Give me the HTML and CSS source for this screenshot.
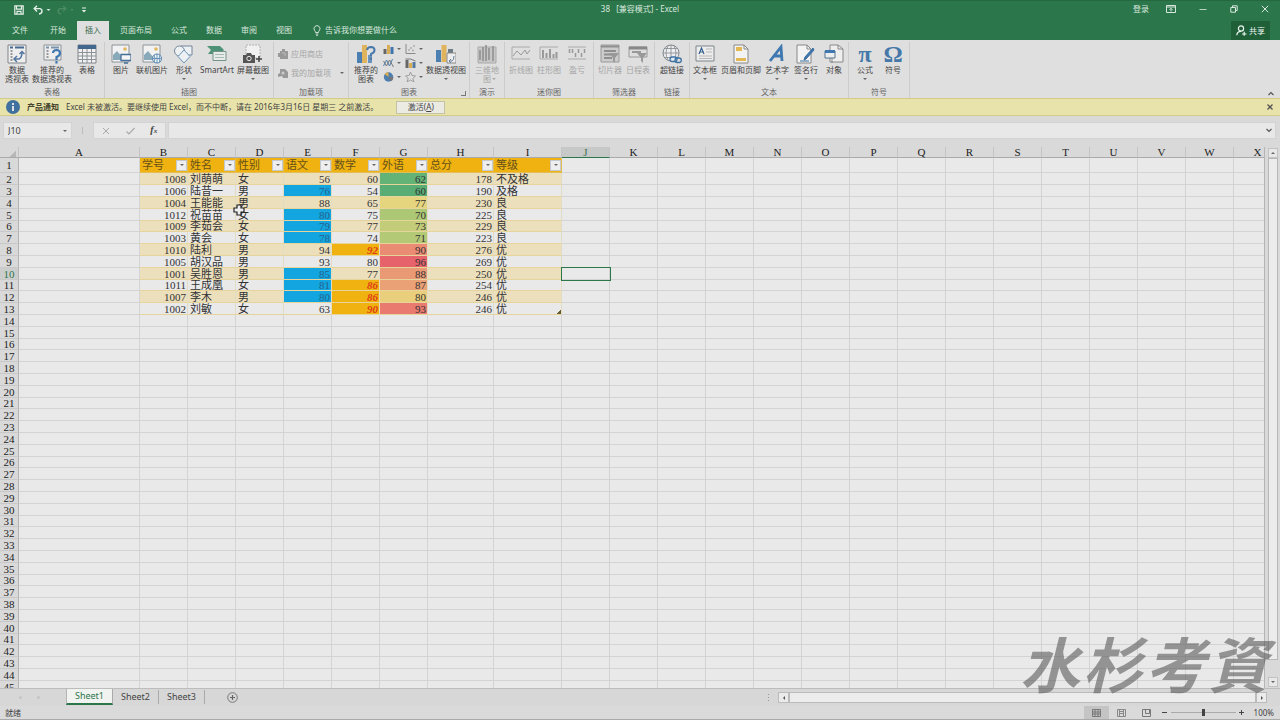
FILE: index.html
```html
<!DOCTYPE html>
<html lang="zh-CN">
<head>
<meta charset="utf-8">
<title>38 [兼容模式] - Excel</title>
<link rel="stylesheet" href="styles.css">
</head>
<body>
<div class="app">
  <header class="top">
    <div class="titlebar">
      <div class="quick">
        <button aria-label="保存"><svg width="10" height="10" viewBox="0 0 10 10"><path d="M.8.8h8.4v8.4H.8zM2.5 1v3.2h5V1M3 9V6.300h4V9" fill="none" stroke="#e4f0e8" stroke-width="1.200"/></svg></button>
        <button aria-label="撤消"><svg width="18" height="10" viewBox="0 0 18 10"><path d="M4 .8L1.200 3.600 4 6.400M1.500 3.600H6.500Q9 3.800 9 6 9 8.500 6 9" fill="none" stroke="#e4f0e8" stroke-width="1.400"/><path d="M13.500 4h4l-2 2z" fill="#d5e6db"/></svg></button>
        <button aria-label="恢复"><svg width="18" height="10" viewBox="0 0 18 10"><path d="M6 .8l2.800 2.800L6 6.400M8.500 3.600H3.500Q1 3.800 1 6 1 8.500 4 9" fill="none" stroke="#4b8c66" stroke-width="1.200"/><path d="M13.500 4h3l-1.500 2z" fill="#4b8c66"/></svg></button>
        <button aria-label="自定义"><svg width="6" height="8" viewBox="0 0 6 8"><path d="M1 2h4" stroke="#e4f0e8"/><path d="M.8 4h4.400L3 6.400z" fill="#e4f0e8"/></svg></button>
      </div>
      <h1 class="doc">38&nbsp;&nbsp; [兼容模式] - Excel</h1>
      <div class="window">
        <button>登录</button>
        <button aria-label="功能区显示选项"><svg width="10" height="8" viewBox="0 0 10 8"><path d="M.5.5h9v7h-9zM.5 2h9M5 6.500V3.500M3.500 4.800L5 3.300l1.500 1.500" fill="none" stroke="#d8e8de"/></svg></button>
        <button aria-label="最小化"><svg width="8" height="8" viewBox="0 0 8 8"><path d="M.5 4.500h7" stroke="#b9d3c3"/></svg></button>
        <button aria-label="还原"><svg width="8" height="8" viewBox="0 0 8 8"><path d="M.8 2.500h4.700v4.700H.8zM2.500 2.500V.8h4.700v4.700H5.500" fill="none" stroke="#d8e8de"/></svg></button>
        <button aria-label="关闭"><svg width="8" height="8" viewBox="0 0 8 8"><path d="M.8.8l6.400 6.400M7.200.8L.8 7.200" stroke="#d8e8de"/></svg></button>
      </div>
    </div>
    <nav class="tabs">
      <button class="file">文件</button><button>开始</button><button class="on">插入</button><button>页面布局</button><button>公式</button><button>数据</button><button>审阅</button><button>视图</button>
      <button class="tell"><svg width="8" height="11" viewBox="0 0 8 11"><path d="M2.500 7.500Q2.500 6.300 1.500 5.300A3 3 0 1 1 6.500 5.300Q5.500 6.300 5.500 7.500zM2.700 9h2.600M3 10.300h2" fill="none" stroke="#dcebe2" stroke-width=".9"/></svg>告诉我你想要做什么</button>
      <button class="share"><svg width="11" height="11" viewBox="0 0 11 11"><circle cx="5" cy="3.500" r="2.600" fill="none" stroke="#edf5f0" stroke-width="1.200"/><path d="M.8 10.300Q1 6.300 5 6.300M6 9h4.500M8.200 6.800v4" fill="none" stroke="#edf5f0" stroke-width="1.200"/></svg>共享</button>
    </nav>
  </header>

  <section class="ribbon">
    <div class="group"><div class="tools">
      <button class="tool w34"><svg viewBox="0 0 20 20"><path d="M1 1h18v18H1z" fill="#eee" stroke="#7e868c"/><path d="M3 3.500h3M8 3.500h9" stroke="#456a91" stroke-width="2"/><path d="M4.500 6v11" stroke="#999" stroke-width="2" stroke-dasharray="2 1"/><path d="M8 15h4q3-1 3-7M10 12l-3 3 3 3M12.500 10L15 7.500l2.500 2.500" fill="none" stroke="#55789f" stroke-width="1.500"/></svg><span>数据<br>透视表</span></button>
      <button class="tool w36"><svg viewBox="0 0 20 20"><path d="M2 1h17v15H2z" fill="#eee" stroke="#899197"/><path d="M4 3.500h3M9 3.500h8" stroke="#7b93ac" stroke-width="2"/><path d="M5.500 6v9" stroke="#999" stroke-width="2" stroke-dasharray="2 1"/><path d="M11 9q.3-3 3.500-3 3.500.2 3.500 3t-3.500 4v3M14.500 17v2.500" fill="none" stroke="#3f77b0" stroke-width="2.200"/></svg><span>推荐的<br>数据透视表</span></button>
      <button class="tool w34"><svg viewBox="0 0 20 20"><path d="M1 1h18v18H1z" fill="#f1f1f1" stroke="#7e868c"/><path d="M1 1h18v4H1z" fill="#41678e"/><path d="M1 8.500h18M1 12h18M1 15.500h18M5.500 5v14M10 5v14M14.500 5v14" stroke="#8c9297"/></svg><span>表格</span></button>
    </div><h2>表格</h2></div>

    <div class="group"><div class="tools pad">
      <button class="tool w28"><svg viewBox="0 0 20 20"><path d="M1 1h17v17H1z" fill="#f2f2f2" stroke="#8e9498"/><path d="M2 15v-4l4-4 6 7v2H2z" fill="#87a9b9"/><circle cx="14" cy="5" r="1.800" fill="#e2b65a"/><path d="M10 10.500h10v6H10zM13 19h4" fill="#f5f5f5" stroke="#456f9b" stroke-width="1.300"/></svg><span>图片</span></button>
      <button class="tool w34"><svg viewBox="0 0 20 20"><path d="M1 1h17v17H1z" fill="#f2f2f2" stroke="#8e9498"/><path d="M2 15v-4l4-4 6 7v2H2z" fill="#87a9b9"/><circle cx="14" cy="5" r="1.800" fill="#e2b65a"/><circle cx="15" cy="14.500" r="4.500" fill="#eef3f7" stroke="#5181ac"/><path d="M10.500 14.500h9M15 10v9M12 11q2 3.500 0 7M18 11q-2 3.500 0 7" fill="none" stroke="#5181ac" stroke-width=".8"/></svg><span>联机图片</span></button>
      <button class="tool more"><svg viewBox="0 0 20 20"><path d="M7 2h11v9H7z" fill="#eef1f3" stroke="#73859b"/><circle cx="5.500" cy="7" r="5" fill="#eef1f3" stroke="#73859b"/><path d="M10 6l6 6.500-6 6.500-6-6.500z" fill="#eef1f3" stroke="#6b92b8"/></svg><span>形状</span></button>
      <button class="tool w36"><svg viewBox="0 0 20 20"><path d="M0 2h13l4 4-4 4H1l3-4z" fill="#4d9177"/><path d="M6 7.500h13v9H6z" fill="#e7ecea" stroke="#739486"/><path d="M8 10.500h9M8 13.500h9" stroke="#a9bab2"/></svg><span>SmartArt</span></button>
      <button class="tool w36 more"><svg viewBox="0 0 20 20"><path d="M3 1h14v13H3z" fill="#f1f1f1" stroke="#b0b0b0" stroke-dasharray="2 1"/><path d="M0 11h3l1-2h4l1 2h3v8H0z" fill="#555"/><circle cx="6" cy="14.500" r="2.200" fill="#555" stroke="#e8e8e8"/><path d="M16 12v6M13 15h6" stroke="#444" stroke-width="1.500"/></svg><span>屏幕截图</span></button>
    </div><h2>插图</h2></div>

    <div class="group"><div class="tools addins">
      <button class="off"><svg width="10" height="10" viewBox="0 0 10 10"><path d="M0 4h2V2h2V0h3v2h3v8H2V8H0z" fill="#999"/><path d="M4 4h3v3" stroke="#bbb" fill="none"/></svg>应用商店</button>
      <button class="off"><svg width="10" height="10" viewBox="0 0 10 10"><path d="M2 1h5l3 3v6H5L4 8 0 9V6l2-1z" fill="#999"/><circle cx="5" cy="5" r="1.500" fill="#ccc"/></svg>我的加载项<i class="arrow push"></i></button>
    </div><h2>加载项</h2></div>

    <div class="group launch"><div class="tools pad">
      <button class="tool"><svg viewBox="0 0 20 20"><path d="M1 8h5v11H1z" fill="#4c80b3"/><path d="M6 1h5v18H6z" fill="#dfb45d"/><path d="M12 11h4v8h-4z" fill="#6993ba"/><path d="M11 6q.5-3 4-3 3.500.2 3.500 3T15 10v2M15 13.500V16" fill="none" stroke="#4879a9" stroke-width="2"/></svg><span>推荐的<br>图表</span></button>
      <div class="mini">
        <button aria-label="柱形图"><svg viewBox="0 0 10 10"><path d="M0 5h3v5H0z" fill="#666"/><path d="M3.500 1h3v9h-3z" fill="#d8ad55"/><path d="M7 3h3v7H7z" fill="#3f74aa"/></svg><i class="arrow"></i></button>
        <button aria-label="散点图"><svg viewBox="0 0 10 10"><path d="M.5 0v9.500H10" fill="none" stroke="#888"/><path d="M3 6h1M5 4h1M7 6.500h1M8 2h1" stroke="#777" stroke-width="1.300"/></svg><i class="arrow"></i></button>
        <button aria-label="折线图"><svg viewBox="0 0 10 10"><path d="M0 8l3-6 3 6 3-7" fill="none" stroke="#4e7faf"/><path d="M0 3l3 5 3-6 4 7" fill="none" stroke="#777"/></svg><i class="arrow"></i></button>
        <button aria-label="组合图"><svg viewBox="0 0 10 10"><path d="M0 2h3v8H0z" fill="#666"/><path d="M3.500 5h3v5h-3z" fill="#d8ad55"/><path d="M7 4h3v6H7z" fill="#55789b"/><path d="M0 1h5l5 2" fill="none" stroke="#777"/></svg><i class="arrow"></i></button>
        <button aria-label="饼图"><svg viewBox="0 0 10 10"><circle cx="5" cy="5" r="4.700" fill="#4d7eae"/><path d="M5 5L1 2Q3-.3 5 .3z" fill="#d8ad55"/><path d="M5 5h5q-.2 3-2.500 4.200z" fill="#777"/></svg><i class="arrow"></i></button>
        <button aria-label="雷达图"><svg viewBox="0 0 10 10"><path d="M5 0l1.300 3.300L10 4 7.300 6.300 8.500 10 5 8 1.500 10l1.200-3.700L0 4l3.700-.7z" fill="none" stroke="#999" stroke-width=".9"/></svg><i class="arrow"></i></button>
      </div>
      <button class="tool w42 more"><svg viewBox="0 0 20 20"><path d="M0 6h5v12H0z" fill="#4c80b3"/><path d="M5.500 1h5v17h-5z" fill="#dfb45d"/><path d="M12 5h5v4h-5z" fill="#6d7b83"/><path d="M11 9h9v10h-9z" fill="#eee" stroke="#888"/><path d="M13 17h3q2-1 2-5M15 15l-2 2 2 2" fill="none" stroke="#657f99"/></svg><span>数据透视图</span></button>
    </div><h2>图表</h2></div>

    <div class="group"><div class="tools">
      <button class="tool w34 off more"><svg viewBox="0 0 20 20"><path d="M1 3h18v16H1z" fill="#c7c7c7" stroke="#aaa"/><path d="M3 6v10M6 3v14M9 1v16M12 4v12M16 2v15" stroke="#9b9b9b" stroke-width="2"/></svg><span>三维地<br>图</span></button>
    </div><h2>演示</h2></div>

    <div class="group"><div class="tools pad">
      <button class="tool w28 off"><svg viewBox="0 0 20 20"><path d="M1 3h18M1 15h18M1 3v12" stroke="#aaa"/><path d="M2 12l4-5 4 4 4-5 2 4 3-4" fill="none" stroke="#999"/></svg><span>折线图</span></button>
      <button class="tool w28 off"><svg viewBox="0 0 20 20"><path d="M1 3h18M1 15h18M1 3v12" stroke="#aaa"/><path d="M4 14V6M7.500 14V9M11 14V5M14.500 14v-4M17.500 14V8" stroke="#999" stroke-width="2"/></svg><span>柱形图</span></button>
      <button class="tool w28 off"><svg viewBox="0 0 20 20"><path d="M1 3h18M1 15h18" stroke="#aaa"/><path d="M2.500 5v4M5.500 5v4M8.500 9v4M11.500 5v4M14.500 9v4M17.500 5v4" stroke="#999" stroke-width="1.500"/></svg><span>盈亏</span></button>
    </div><h2>迷你图</h2></div>

    <div class="group"><div class="tools pad">
      <button class="tool w28 off"><svg viewBox="0 0 20 20"><path d="M1 1h18v17H1z" fill="#ccc" stroke="#999"/><path d="M1 2.500h18M4 7h12M4 10.500h8M4 14h8" stroke="#8f8f8f" stroke-width="2"/><path d="M9 9h10l-4 5v5l-2-2v-3z" fill="#999"/></svg><span>切片器</span></button>
      <button class="tool w28 off"><svg viewBox="0 0 20 20"><path d="M1 3h18v10H1z" fill="#ddd" stroke="#999"/><path d="M1 4h18" stroke="#888" stroke-width="3"/><path d="M4 8h9" stroke="#999" stroke-width="2"/><path d="M9 9h10l-4 5v5l-2-2v-3z" fill="#999"/></svg><span>日程表</span></button>
    </div><h2>筛选器</h2></div>

    <div class="group"><div class="tools">
      <button class="tool w34"><svg viewBox="0 0 20 20"><circle cx="9" cy="9" r="8" fill="#eee" stroke="#80878d"/><path d="M1 9h16M9 1v16M3 4.500h12M3 13.500h12M6 2q-4 7 0 14M12 2q4 7 0 14" fill="none" stroke="#80878d" stroke-width=".8"/><rect x="8" y="13" width="7" height="4.500" rx="2.200" fill="#e6ecf1" stroke="#3e72a5" stroke-width="1.300"/><rect x="13" y="14" width="6.300" height="4.500" rx="2.200" fill="none" stroke="#3e72a5" stroke-width="1.300"/></svg><span>超链接</span></button>
    </div><h2>链接</h2></div>

    <div class="group"><div class="tools">
      <button class="tool more"><svg viewBox="0 0 20 20"><path d="M1 2h18v15H1z" fill="#ededed" stroke="#7d858b"/><path d="M4 10l2.500-6L9 10M5 8h3" fill="none" stroke="#315f8d" stroke-width="1.200"/><path d="M11 5h6M11 8h6M4 12h13M4 14.500h13" stroke="#aaa" stroke-width=".8"/></svg><span>文本框</span></button>
      <button class="tool w42"><svg viewBox="0 0 20 20"><path d="M3 1h10l4 4v14H3z" fill="#f3f3f3" stroke="#888"/><path d="M13 1v4h4" fill="none" stroke="#888"/><path d="M5 3h6v4H5zM5 14h10v3H5z" fill="#e4b952"/></svg><span>页眉和页脚</span></button>
      <button class="tool more"><svg viewBox="0 0 20 20"><path d="M3 17L14 3l1 14M6 12h9" fill="none" stroke="#3f77b0" stroke-width="2.800"/></svg><span>艺术字</span></button>
      <button class="tool w28 more"><svg viewBox="0 0 20 20"><path d="M1 1h10l4 4v14H1z" fill="#f3f3f3" stroke="#888"/><path d="M11 1v4h4" fill="none" stroke="#888"/><path d="M18 6l-8 9-2 1 1-3 8-9zM4 17h9" fill="#3f77b0" stroke="#3b6d9e"/></svg><span>签名行</span></button>
      <button class="tool w28"><svg viewBox="0 0 20 20"><path d="M6 1h8l5 4v13H6z" fill="#eee" stroke="#888"/><path d="M14 1v4h5M8 19v-7" fill="none" stroke="#888"/><path d="M1 7h10v7H1z" fill="#eee" stroke="#56758f"/><path d="M1 7.500h10" stroke="#3f77b0" stroke-width="3"/></svg><span>对象</span></button>
    </div><h2>文本</h2></div>

    <div class="group"><div class="tools pad">
      <button class="tool w28 more"><b class="sym">π</b><span>公式</span></button>
      <button class="tool w28"><b class="sym">Ω</b><span>符号</span></button>
    </div><h2>符号</h2></div>
    <button class="fold" aria-label="折叠功能区"><svg width="6" height="5" viewBox="0 0 6 5"><path d="M.5 4L3 1.500 5.500 4" fill="none" stroke="#555" stroke-width="1.200"/></svg></button>
  </section>

  <section class="notice">
    <svg width="14" height="14" viewBox="0 0 14 14"><circle cx="7" cy="7" r="7" fill="#41719f"/><path d="M7 3v2M7 6v5" stroke="#eee" stroke-width="1.800"/></svg>
    <strong>产品通知</strong>
    <p>Excel 未被激活。要继续使用 Excel，而不中断，请在 2016年3月16日 星期三 之前激活。</p>
    <button class="activate">激活(<u>A</u>)</button>
    <button class="dismiss" aria-label="关闭通知"><svg width="6" height="6" viewBox="0 0 6 6"><path d="M.5.5l5 5M5.500.5l-5 5" stroke="#555" stroke-width="1.300"/></svg></button>
  </section>

  <section class="formula">
    <div class="namebox"><input aria-label="名称框" value="J10"><i class="arrow"></i></div>
    <i class="grip"></i>
    <div class="fx">
      <button aria-label="取消"><svg width="8" height="8" viewBox="0 0 8 8"><path d="M1 1l6 6M7 1L1 7" stroke="#aaa"/></svg></button>
      <button aria-label="输入"><svg width="9" height="8" viewBox="0 0 9 8"><path d="M.5 4.500l2.500 2.500L8.500 1" fill="none" stroke="#aaa" stroke-width="1.200"/></svg></button>
      <button aria-label="插入函数"><em>f<small>x</small></em></button>
    </div>
    <div class="entry"><input aria-label="编辑栏"><svg width="6" height="5" viewBox="0 0 6 5"><path d="M.5 1L3 3.500 5.500 1" fill="none" stroke="#555" stroke-width="1.200"/></svg></div>
  </section>

  <main class="work">
    <div class="sheet"><table class="grid" id="grid"></table></div>
    <div class="vbar"><button aria-label="向上"><i class="arrow up"></i></button><div class="thumb"></div><button aria-label="向下"><i class="arrow"></i></button></div>
    <svg class="cursor" width="12" height="12" viewBox="0 0 12 12"><path d="M4 1h4v3h3v4H8v3H4V8H1V4h3z" fill="#eee" stroke="#222" stroke-width="1.200"/></svg>
  </main>

  <nav class="sheets">
    <span class="step"><i></i><i></i></span>
    <button class="on">Sheet1</button><button>Sheet2</button><button>Sheet3</button>
    <button class="add" aria-label="新工作表"><svg width="11" height="11" viewBox="0 0 11 11"><circle cx="5.500" cy="5.500" r="4.800" fill="none" stroke="#777"/><path d="M5.500 3v5M3 5.500h5" stroke="#666" stroke-width="1.200"/></svg></button>
    <i class="dots"></i>
    <div class="hbar"><button aria-label="向左"><i class="arrow left"></i></button><div class="track"></div><button aria-label="向右"><i class="arrow right"></i></button></div>
  </nav>

  <footer class="status">
    <span>就绪</span>
    <div class="views">
      <button class="on" aria-label="普通"><svg width="9" height="8" viewBox="0 0 9 8"><path d="M.5.5h8v7h-8zM.5 3h8M.5 5h8M3 .5v7M6 .5v7" fill="none" stroke="#777"/></svg></button>
      <button aria-label="页面布局"><svg width="9" height="8" viewBox="0 0 9 8"><path d="M.5.5h8v7h-8zM2.500.5v7M6.500.5v7M2.500 2.500h4M2.500 4.500h4" fill="none" stroke="#888"/></svg></button>
      <button aria-label="分页预览"><svg width="9" height="8" viewBox="0 0 9 8"><path d="M.5.5h8v7h-8zM3.500.5v4h4v-4" fill="none" stroke="#777"/></svg></button>
    </div>
    <button class="sign" aria-label="缩小"><svg width="5" height="5" viewBox="0 0 5 5"><path d="M0 2.500h5" stroke="#444"/></svg></button>
    <input class="zoom" type="range" aria-label="缩放" value="50">
    <button class="sign" aria-label="放大"><svg width="5" height="5" viewBox="0 0 5 5"><path d="M0 2.500h5M2.500 0v5" stroke="#444"/></svg></button>
    <span class="pct">100%</span>
  </footer>
  <div class="brand"><span>水</span><span>杉</span><span>考</span><span>資</span></div>
</div>
<script src="sheet.js"></script>
</body>
</html>
```
FILE: styles.css
```css
* { box-sizing: border-box; }
body { margin: 0; }
body, button, input { font-family: "Noto Sans", "Noto Sans CJK SC", sans-serif; font-size: 8px; line-height: 10px; color: #444; }
button { border: 0; padding: 0; background: none; display: flex; align-items: center; justify-content: center; white-space: nowrap; }
svg { flex: none; }
h1, h2, p { margin: 0; font-size: 8px; font-weight: normal; }
.app { position: relative; display: flex; flex-direction: column; height: 100vh; overflow: hidden; background: #d9d9d9; }

.top { background: #2c764b; border-top: 1px solid #25683f; }
.top button, .doc { color: #d8e8de; }
.titlebar { display: grid; grid-template-columns: 1fr auto 1fr; align-items: center; height: 16px; }
.quick { display: flex; align-items: center; gap: 9px; padding: 2px 0 0 14px; }
.quick button + button { margin-right: -3px; }
.window { display: flex; justify-content: flex-end; gap: 23px; padding-right: 11px; }
.window button:first-child { margin-right: -6px; }
.tabs { display: flex; gap: 3px; padding: 4px 10px 0 4px; height: 23px; }
.tabs button { padding: 0 8px 1px; }
.tabs .file { margin-right: 3px; }
.tabs .on { background: #dfdfdf; color: #35694a; }
.tabs .tell { gap: 4px; padding-left: 10px; }
.tabs .share { margin-left: auto; gap: 2px; padding: 0 5px; background: #1f6039; color: #edf5f0; }

.ribbon { display: flex; height: 58px; padding-top: 2px; background: #dfdfdf; }
.group { display: flex; flex-direction: column; padding-bottom: 1px; border-right: 1px solid #ccc; position: relative; }
.group h2 { margin-top: auto; text-align: center; line-height: 10px; color: #666; }
.launch::after { content: ""; position: absolute; right: 3px; bottom: 2px; width: 4px; height: 4px; border: solid #777; border-width: 0 1px 1px 0; }
.tools { display: flex; height: 44px; }
.pad { padding: 0 2px; }
.tool { width: 30px; flex-direction: column; justify-content: flex-start; padding-top: 2px; line-height: 9px; position: relative; }
.tool svg { width: 20px; height: 20px; margin-bottom: 1px; }
.w28 { width: 28px; }
.w34 { width: 34px; }
.w36 { width: 36px; }
.w42 { width: 42px; }
.more::after { content: ""; position: absolute; bottom: 6px; border: 2px solid transparent; border-top-color: #666; border-bottom: 0; }
.off, .off span { color: #a5a5a5; }
.off.more::after { right: 8px; border-top-color: #aaa; }
.sym { width: 20px; height: 21px; font: bold 24px/20px "Liberation Serif", serif; color: #4678a9; }
.arrow { width: 0; height: 0; border: 2px solid transparent; border-top-color: #666; border-bottom: 0; }
.up { border: 2px solid transparent; border-bottom-color: #666; border-top: 0; }
.left { border: 2px solid transparent; border-right-color: #555; border-left: 0; }
.right { border: 2px solid transparent; border-left-color: #555; border-right: 0; }
.addins { flex-direction: column; width: 74px; padding: 3px 4px; gap: 1px; }
.addins button { height: 18px; gap: 3px; justify-content: flex-start; }
.push { margin-left: auto; }
.mini { display: grid; grid-template-columns: 22px 22px; align-content: start; }
.mini button { height: 14px; gap: 3px; }
.mini svg { width: 11px; height: 10px; }
.fold { margin: auto 6px 2px auto; }

.notice { display: flex; align-items: center; height: 18px; padding: 0 7px 0 6px; background: #e8e3ab; border: solid #d2cd86; border-width: 1px 0; }
.notice strong { margin: 0 7px; color: #45432d; }
.activate { margin-left: 18px; width: 49px; height: 13px; background: #ebebe4; border: 1px solid #c5c3a5; }
.dismiss { margin-left: auto; }

.formula { display: flex; height: 31px; padding: 6px 4px 8px 3px; }
.formula input { border: 0; padding: 0; background: none; outline: 0; min-width: 0; flex: 1; }
.namebox, .fx, .entry { display: flex; align-items: center; background: #e8e8e8; border: 1px solid #d3d3d3; }
.namebox { width: 69px; padding: 0 4px; }
.namebox input { font-size: 9px; }
.grip { width: 1px; margin: 5px 10px; background: #bbb; }
.fx { width: 73px; justify-content: space-around; }
.fx em { font: italic bold 10px/12px "Liberation Serif", serif; }
.fx small { font-size: 7px; }
.entry { flex: 1; margin-left: 2px; padding: 0 3px; }

.work { flex: 1; min-height: 0; display: flex; position: relative; }
.sheet { flex: 1; min-width: 0; overflow: hidden; background: #e9e9e9; border-right: 1px solid #b5b5b5; }
.grid { width: 1282px; table-layout: fixed; border-collapse: separate; border-spacing: 0; font: 11px/10px "Liberation Serif", "Noto Sans CJK SC", serif; color: #333; }
.grid .head { width: 19px; }
.grid .first { width: 121px; }
.grid .col { width: 48px; }
.grid .total { width: 66px; }
.grid .grade { width: 68px; }
.grid th, .grid td { height: 12px; padding: 0 2px; border: solid #d3d3d3; border-width: 0 1px 1px 0; white-space: nowrap; vertical-align: bottom; }
.grid th { padding: 0; background: #d9d9d9; font-weight: normal; text-align: center; border-color: #c8c8c8; border-right-color: #b2b2b2; color: #222; }
.grid thead th { height: 11px; border-bottom-color: #aaa; border-right-color: #c4c4c4; }
.grid thead .current { background: #c6c9c7; color: #3c7153; border-bottom-color: #2c764b; }
.grid .current { color: #2c764b; background: #cccecd; }
.grid .short > * { height: 11px; }
.grid .title > * { height: 15px; vertical-align: middle; }
.corner i { display: block; margin: 1px 2px 0 auto; width: 7px; height: 7px; background: linear-gradient(135deg, transparent 50%, #b8b8b8 50%); }
.grid .name { background: #efb210; border-color: #e3bd55; color: #665019; }
.name div { display: flex; align-items: center; justify-content: space-between; }
.name button { width: 11px; height: 11px; margin-right: -2px; background: #eee; border: 1px solid #c3c9cf; }
.grid .line { border-color: #e7d49b; border-right-color: #e3dcc5; }
.grid .band { background: #ebdfbc; }
.grid .num { text-align: right; padding-right: 1px; }
.grid .low { background: #12a5df; color: #28638a; }
.grid .high { background: #efb210; color: #df3c16; font-weight: bold; font-style: italic; }
.grid .end { background: linear-gradient(315deg, #665a30 3px, transparent 3px); }
.grid .picked { outline: 1px solid #2c764b; outline-offset: 0; }
.vbar { width: 15px; display: flex; flex-direction: column; padding: 1px 2px 1px 3px; }
.vbar button { height: 10px; background: #e8e8e8; border: 1px solid #c2c2c2; }
.thumb { flex: 1; background: #ececec; border: 1px solid #b8b8b8; margin-bottom: 17px; }
.cursor { position: absolute; left: 233px; top: 57px; }

.sheets { display: flex; height: 18px; border-top: 1px solid #bcbcbc; background: #d7d7d7; }
.sheets > button { width: 46px; height: 14px; margin-top: 1px; font-size: 9px; border-right: 1px solid #aaa; }
.sheets > .on { width: 47px; height: 16px; margin-top: 0; background: #f0f3f0; color: #2c764b; border-left: 1px solid #b5b5b5; border-bottom: 2px solid #2c764b; }
.sheets > .add { width: 54px; border: 0; }
.step { width: 66px; padding: 7px 19px; display: flex; gap: 15px; }
.step i { width: 3px; height: 3px; background: #c5c5c5; border-radius: 2px; }
.dots { width: 1px; margin: 5px 9px 5px auto; background: repeating-linear-gradient(#999 0 1px, transparent 1px 3px); }
.hbar { display: flex; width: 489px; margin: 3px 13px 3px 0; }
.hbar button { width: 11px; background: #ebebeb; border: 1px solid #bbb; }
.track { flex: 1; background: #ececec; border: 1px solid #bbb; }

.status { display: flex; align-items: center; height: 14px; padding: 0 6px 0 5px; border-bottom: 1px solid #aaa; background: #dadada; }
.views { display: flex; align-self: stretch; margin-left: auto; }
.views button { width: 25px; }
.views .on { background: #c4c4c4; }
.sign { width: 12px; }
.zoom { appearance: none; width: 65px; height: 9px; margin: 0; background: linear-gradient(#aaa, #aaa) center / 100% 1px no-repeat; }
.zoom::-webkit-slider-thumb { appearance: none; width: 3px; height: 7px; background: #444; }
.pct { margin-left: 6px; }
.brand { position: absolute; right: 12px; bottom: 18px; width: 248px; display: flex; justify-content: space-between; font: italic bold 60px/80px "Noto Sans CJK TC", sans-serif; color: rgba(90, 90, 90, .6); pointer-events: none; }
```
FILE: sheet.js
```js
const grid = document.getElementById('grid');
const letters = 'ABCDEFGHIJKLMNOPQRSTUVWX'.split('');
const titles = ['学号', '姓名', '性别', '语文', '数学', '外语', '总分', '等级'];
const people = [
  [1008, '刘萌萌', '女', 56, 60, 62, 178, '不及格', '#63b276'],
  [1006, '陆昔一', '男', 76, 54, 60, 190, '及格', '#57ad73'],
  [1004, '王能能', '男', 88, 65, 77, 230, '良', '#e5d57f'],
  [1012, '祝苗苗', '女', 80, 75, 70, 225, '良', '#adc875'],
  [1009, '李茹会', '女', 79, 77, 73, 229, '良', '#c3cc78'],
  [1003, '黄会', '女', 78, 74, 71, 223, '良', '#b4c976'],
  [1010, '陆利', '男', 94, 92, 90, 276, '优', '#ea8b73'],
  [1005, '胡汉品', '男', 93, 80, 96, 269, '优', '#e6636b'],
  [1001, '吴胜恩', '男', 85, 77, 88, 250, '优', '#ea9975'],
  [1011, '王成凰', '女', 81, 86, 87, 254, '优', '#eaa176'],
  [1007, '李木', '男', 80, 86, 80, 246, '优', '#e9ce7b'],
  [1002, '刘敏', '女', 63, 90, 93, 246, '优', '#e97a70']
];
const widths = ['head', 'first', ...letters.slice(1).map(l => l === 'H' ? 'total' : l === 'I' ? 'grade' : 'col')];
let html = '<colgroup>' + widths.map(w => `<col class="${w}">`).join('') + '</colgroup>';
html += '<thead><tr><th class="corner"><i></i></th>' +
  letters.map(l => `<th class="${l === 'J' ? 'current' : ''}">${l}</th>`).join('') + '</tr></thead><tbody>';

function cell(row, col) {
  const k = col - 1;
  if (k < 0 || k > 7 || row > 13) return `<td class="${row === 10 && col === 9 ? 'picked' : ''}"></td>`;
  if (row === 1) return `<td class="name"><div>${titles[k]}<button aria-label="筛选"><i class="arrow"></i></button></div></td>`;
  const p = people[row - 2];
  const cls = ['line'];
  if (row % 2 === 0) cls.push('band');
  if (row === 13 && k === 7) cls.push('end');
  if (typeof p[k] === 'number') cls.push('num');
  if (k === 3 && p[k] > 75 && p[k] < 86) cls.push('low');
  if (k === 4 && p[k] > 85) cls.push('high');
  const tint = k === 5 ? ` style="background:${p[8]}"` : '';
  return `<td class="${cls.join(' ')}"${tint}>${p[k]}</td>`;
}

for (let row = 1; row <= 45; row++) {
  const kind = row === 1 ? 'title' : row % 5 === 1 ? 'short' : '';
  html += `<tr class="${kind}"><th class="${row === 10 ? 'current' : ''}">${row}</th>` +
    letters.map((l, col) => cell(row, col)).join('') + '</tr>';
}
grid.innerHTML = html + '</tbody>';
```
